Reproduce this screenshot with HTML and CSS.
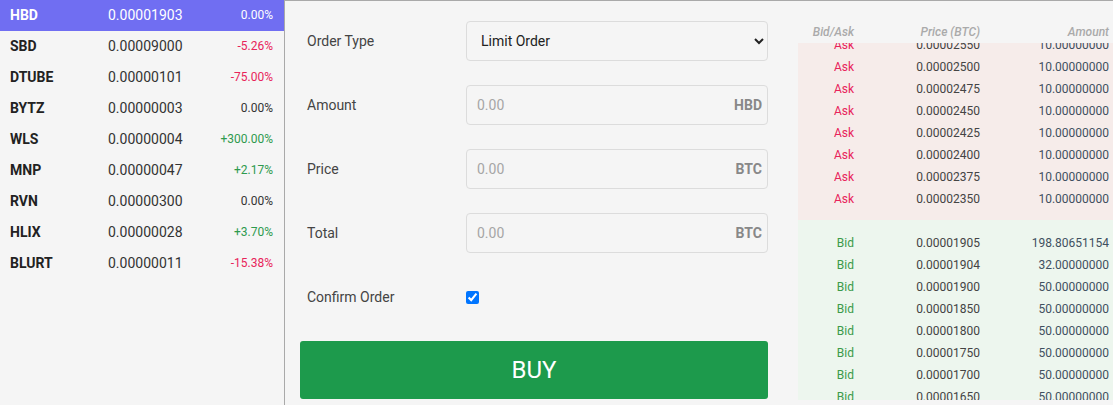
FILE: index.html
```html
<!DOCTYPE html>
<html>
<head>
    <title>Exchange</title>
    <link rel="stylesheet" href="styles.css">
</head>
<body>
    <div class="exchange">
        <aside class="markets">
            <div class="markets__row markets__row--active"><span class="markets__sym">HBD</span><span class="markets__price">0.00001903</span><span class="markets__change">0.00%</span></div>
            <div class="markets__row"><span class="markets__sym">SBD</span><span class="markets__price">0.00009000</span><span class="markets__change markets__change--down">-5.26%</span></div>
            <div class="markets__row"><span class="markets__sym">DTUBE</span><span class="markets__price">0.00000101</span><span class="markets__change markets__change--down">-75.00%</span></div>
            <div class="markets__row"><span class="markets__sym">BYTZ</span><span class="markets__price">0.00000003</span><span class="markets__change">0.00%</span></div>
            <div class="markets__row"><span class="markets__sym">WLS</span><span class="markets__price">0.00000004</span><span class="markets__change markets__change--up">+300.00%</span></div>
            <div class="markets__row"><span class="markets__sym">MNP</span><span class="markets__price">0.00000047</span><span class="markets__change markets__change--up">+2.17%</span></div>
            <div class="markets__row"><span class="markets__sym">RVN</span><span class="markets__price">0.00000300</span><span class="markets__change">0.00%</span></div>
            <div class="markets__row"><span class="markets__sym">HLIX</span><span class="markets__price">0.00000028</span><span class="markets__change markets__change--up">+3.70%</span></div>
            <div class="markets__row"><span class="markets__sym">BLURT</span><span class="markets__price">0.00000011</span><span class="markets__change markets__change--down">-15.38%</span></div>
        </aside>

        <main class="trade">
            <div class="order-form">
                <div class="order-form__row">
                    <label class="order-form__label" for="orderType">Order Type</label>
                    <select id="orderType" class="order-form__select">
                        <option>Limit Order</option>
                        <option>Market Order</option>
                    </select>
                </div>
                <div class="order-form__row">
                    <label class="order-form__label" for="amount">Amount</label>
                    <div class="order-form__field">
                        <input id="amount" class="order-form__input" type="text" placeholder="0.00">
                        <span class="order-form__unit">HBD</span>
                    </div>
                </div>
                <div class="order-form__row">
                    <label class="order-form__label" for="price">Price</label>
                    <div class="order-form__field">
                        <input id="price" class="order-form__input" type="text" placeholder="0.00">
                        <span class="order-form__unit">BTC</span>
                    </div>
                </div>
                <div class="order-form__row">
                    <label class="order-form__label" for="total">Total</label>
                    <div class="order-form__field">
                        <input id="total" class="order-form__input" type="text" placeholder="0.00">
                        <span class="order-form__unit">BTC</span>
                    </div>
                </div>
                <div class="order-form__row">
                    <label class="order-form__label" for="confirm">Confirm Order</label>
                    <div><input id="confirm" class="order-form__check" type="checkbox" checked></div>
                </div>
                <button class="order-form__buy">BUY</button>
            </div>

            <div class="book">
                <div class="book__head">
                    <span>Bid/Ask</span><span>Price (BTC)</span><span>Amount</span>
                </div>
                <div class="book__asks">
                    <div class="book__row"><span class="book__ask">Ask</span><span>0.00002550</span><span class="book__amt">10.00000000</span></div>
                    <div class="book__row"><span class="book__ask">Ask</span><span>0.00002500</span><span class="book__amt">10.00000000</span></div>
                    <div class="book__row"><span class="book__ask">Ask</span><span>0.00002475</span><span class="book__amt">10.00000000</span></div>
                    <div class="book__row"><span class="book__ask">Ask</span><span>0.00002450</span><span class="book__amt">10.00000000</span></div>
                    <div class="book__row"><span class="book__ask">Ask</span><span>0.00002425</span><span class="book__amt">10.00000000</span></div>
                    <div class="book__row"><span class="book__ask">Ask</span><span>0.00002400</span><span class="book__amt">10.00000000</span></div>
                    <div class="book__row"><span class="book__ask">Ask</span><span>0.00002375</span><span class="book__amt">10.00000000</span></div>
                    <div class="book__row"><span class="book__ask">Ask</span><span>0.00002350</span><span class="book__amt">10.00000000</span></div>
                </div>
                <div class="book__bids">
                    <div class="book__row"><span class="book__bid">Bid</span><span>0.00001905</span><span class="book__amt">198.80651154</span></div>
                    <div class="book__row"><span class="book__bid">Bid</span><span>0.00001904</span><span class="book__amt">32.00000000</span></div>
                    <div class="book__row"><span class="book__bid">Bid</span><span>0.00001900</span><span class="book__amt">50.00000000</span></div>
                    <div class="book__row"><span class="book__bid">Bid</span><span>0.00001850</span><span class="book__amt">50.00000000</span></div>
                    <div class="book__row"><span class="book__bid">Bid</span><span>0.00001800</span><span class="book__amt">50.00000000</span></div>
                    <div class="book__row"><span class="book__bid">Bid</span><span>0.00001750</span><span class="book__amt">50.00000000</span></div>
                    <div class="book__row"><span class="book__bid">Bid</span><span>0.00001700</span><span class="book__amt">50.00000000</span></div>
                    <div class="book__row"><span class="book__bid">Bid</span><span>0.00001650</span><span class="book__amt">50.00000000</span></div>
                </div>
            </div>
        </main>
    </div>
</body>
</html>
```

FILE: styles.css
```css
* {
    margin: 0;
    padding: 0;
    box-sizing: border-box;
}

body {
    font-family: Roboto, "Liberation Sans", sans-serif;
    background: #f5f5f5;
    color: #333;
    height: 100vh;
    overflow: hidden;
}

.exchange {
    display: flex;
    height: 100vh;
}

/* market list */
.markets {
    width: 284px;
    flex-shrink: 0;
}

.markets__row {
    display: flex;
    align-items: center;
    height: 31px;
    padding: 0 11px 2px 10px;
    font-size: 14px;
}

.markets__row--active {
    background: #706ef2;
    color: white;
}

.markets__sym {
    width: 98px;
    font-weight: 700;
    color: #222;
}

.markets__price {
    flex: 1;
    color: #333;
}

.markets__row--active .markets__sym,
.markets__row--active .markets__price,
.markets__row--active .markets__change {
    color: white;
}

.markets__change {
    font-size: 12px;
    color: #333;
}

.markets__change--down {
    color: #e8245a;
}

.markets__change--up {
    color: #2e9a4e;
}

/* trade area */
.trade {
    flex: 1;
    display: flex;
    border-left: 1px solid #a9a9a9;
    border-top: 1px solid #a9a9a9;
    padding-left: 15px;
    min-width: 0;
}

.order-form {
    width: 468px;
    flex-shrink: 0;
    padding-top: 20px;
}

.order-form__row {
    display: grid;
    grid-template-columns: 166px 1fr;
    align-items: center;
    height: 40px;
    margin-bottom: 24px;
}

.order-form__label {
    padding-left: 7px;
    font-size: 14px;
    color: #444;
}

.order-form__select {
    height: 40px;
    width: 100%;
    padding: 0 10px;
    border: 1px solid #dcdcdc;
    border-radius: 4px;
    background: #f5f5f5;
    font-family: inherit;
    font-size: 14px;
    color: #222;
}

.order-form__field {
    display: flex;
    align-items: center;
    height: 40px;
    border: 1px solid #dcdcdc;
    border-radius: 4px;
    padding: 0 5px 0 10px;
}

.order-form__input {
    flex: 1;
    min-width: 0;
    border: none;
    background: transparent;
    font-family: inherit;
    font-size: 14px;
    color: #333;
    outline: none;
}

.order-form__input::placeholder {
    color: #a6a6a6;
}

.order-form__unit {
    font-size: 14px;
    font-weight: 700;
    color: #888;
}

.order-form__check {
    display: block;
    width: 13px;
    height: 13px;
    margin: 0;
}

.order-form__buy {
    width: 100%;
    height: 58px;
    border: none;
    border-radius: 3px;
    background: #1d9a4c;
    color: white;
    font-family: inherit;
    font-size: 24px;
    cursor: pointer;
}

/* order book */
.book {
    flex: 1;
    margin-left: 30px;
    padding-top: 20px;
    font-size: 12px;
    min-width: 0;
}

.book__head,
.book__row {
    display: grid;
    grid-template-columns: 60px 126px 1fr;
    text-align: right;
}

.book__head span,
.book__row span {
    padding-right: 4px;
}

.book__head {
    height: 22px;
    align-items: center;
    font-style: italic;
    font-weight: 500;
    color: #aaa;
}

.book__row {
    flex-shrink: 0;
    height: 22px;
    align-items: center;
    color: #444;
}

.book__asks {
    height: 177px;
    display: flex;
    flex-direction: column;
    justify-content: flex-end;
    overflow: hidden;
    padding-bottom: 10px;
    background: #f6ecea;
}

.book__bids {
    height: 180px;
    overflow: hidden;
    padding-top: 12px;
    background: #edf6ee;
}

.book__ask {
    color: #e8245a;
}

.book__bid {
    color: #3b9a4a;
}

.book__amt {
    color: #3f5060;
}
```
